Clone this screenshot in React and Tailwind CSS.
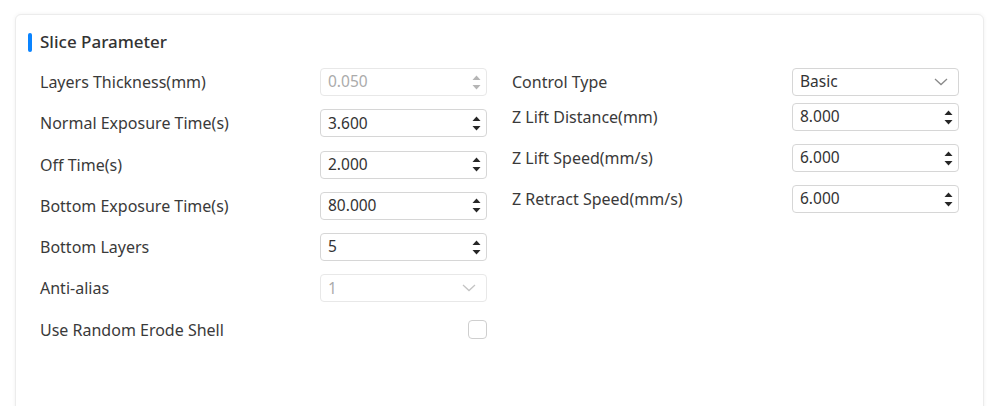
import { useState } from "react";

const leftRows = [
  { label: "Layers Thickness(mm)", type: "number", value: "0.050", disabled: true },
  { label: "Normal Exposure Time(s)", type: "number", value: "3.600" },
  { label: "Off Time(s)", type: "number", value: "2.000" },
  { label: "Bottom Exposure Time(s)", type: "number", value: "80.000" },
  { label: "Bottom Layers", type: "number", value: "5" },
  { label: "Anti-alias", type: "select", value: "1", disabled: true },
  { label: "Use Random Erode Shell", type: "checkbox" },
];

const rightRows = [
  { label: "Z Lift Distance(mm)", type: "number", value: "8.000" },
  { label: "Z Lift Speed(mm/s)", type: "number", value: "6.000" },
  { label: "Z Retract Speed(mm/s)", type: "number", value: "6.000" },
];

function Spinner({ disabled }) {
  const c = disabled ? "#b5b5b5" : "#262626";
  return (
    <div className="flex flex-col items-center justify-center gap-[5px] pr-[5px]">
      <svg width="9" height="5" viewBox="0 0 9 5">
        <path d="M0.5 5 L4.5 0.5 L8.5 5 Z" fill={c} />
      </svg>
      <svg width="9" height="5" viewBox="0 0 9 5">
        <path d="M0.5 0 L4.5 4.5 L8.5 0 Z" fill={c} />
      </svg>
    </div>
  );
}

function Chevron({ disabled }) {
  return (
    <svg width="14" height="8" viewBox="0 0 14 8" className="mr-[10px]">
      <path d="M1 1 L7 6.5 L13 1" fill="none" stroke={disabled ? "#c4c4c4" : "#8a8a8a"} strokeWidth="1.3" />
    </svg>
  );
}

function Field({ row }) {
  const [checked, setChecked] = useState(false);
  if (row.type === "checkbox") {
    return (
      <div className="w-[167px] flex justify-end">
        <button
          onClick={() => setChecked(!checked)}
          className="w-[19px] h-[19px] rounded-[4px] border border-[#cfcfcf] bg-white"
        />
      </div>
    );
  }
  const box = row.disabled
    ? "border-[#e8e8e8] text-[#ababab]"
    : "border-[#d6d6d6] text-[#333333]";
  return (
    <div className={`w-[167px] h-[28px] rounded-[4px] border bg-white flex items-center justify-between pl-[7px] ${box}`}>
      <span className="text-[15.5px] leading-none">{row.value}</span>
      {row.type === "number" ? <Spinner disabled={row.disabled} /> : <Chevron disabled={row.disabled} />}
    </div>
  );
}

function Row({ row }) {
  return (
    <div className="flex items-center justify-between h-[28px]">
      <span className="text-[16px] text-[#3a3a3a]">{row.label}</span>
      <Field row={row} />
    </div>
  );
}

export default function App() {
  return (
    <div className="w-[1000px] h-[406px] bg-white overflow-hidden pt-[14px] pl-[15px] pr-[16px]" style={{ fontFamily: '"Noto Sans", "Open Sans", sans-serif' }}>
      <div className="h-[420px] rounded-[6px] border border-[#ececec] shadow-[0_0_4px_rgba(0,0,0,0.06)] bg-white pt-[17px] pl-[12px] pr-[24px]">
        {/* Title */}
        <div className="flex items-center gap-[8px] h-[20px]">
          <span className="w-[4px] h-[19px] rounded-full bg-[#0a84ff]" />
          <h2 className="text-[17px] text-[#333333] font-medium">Slice Parameter</h2>
        </div>

        <div className="grid grid-cols-2 gap-x-[25px] mt-[16px] pl-[12px]">
          {/* Left column */}
          <div className="flex flex-col gap-[13.3px]">
            {leftRows.map((r) => (
              <Row key={r.label} row={r} />
            ))}
          </div>

          {/* Right column */}
          <div className="flex flex-col">
            <Row row={{ label: "Control Type", type: "select", value: "Basic" }} />
            <div className="flex flex-col gap-[13px] mt-[7px]">
              {rightRows.map((r) => (
                <Row key={r.label} row={r} />
              ))}
            </div>
          </div>
        </div>
      </div>
    </div>
  );
}
